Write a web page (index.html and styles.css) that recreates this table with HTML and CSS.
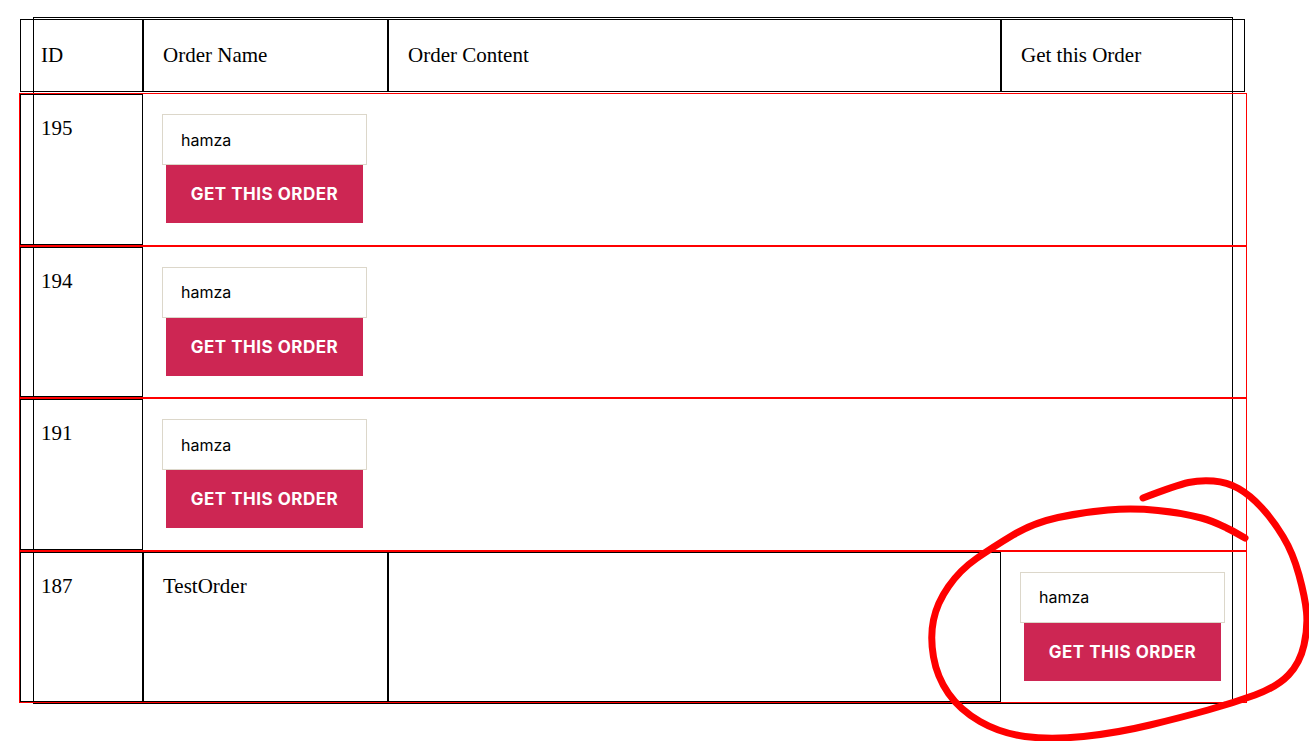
FILE: index.html
```html
<!DOCTYPE html>
<html lang="en">
<head>
    <meta charset="UTF-8">
    <meta name="viewport" content="width=device-width, initial-scale=1.0">
    <title>Orders</title>
    <link rel="stylesheet" href="styles.css">
</head>
<body>
    <div class="orders">
        <div class="head">
            <div class="cell c-id">ID</div>
            <div class="cell c-name">Order Name</div>
            <div class="cell c-content">Order Content</div>
            <div class="cell c-get">Get this Order</div>
        </div>

        <div class="row">
            <div class="cell id-box">195</div>
            <div class="cell c-wide">
                <form class="order-form">
                    <input type="text" class="order-input" value="hamza">
                    <button type="button" class="get-order">Get this order</button>
                </form>
            </div>
        </div>

        <div class="row">
            <div class="cell id-box">194</div>
            <div class="cell c-wide">
                <form class="order-form">
                    <input type="text" class="order-input" value="hamza">
                    <button type="button" class="get-order">Get this order</button>
                </form>
            </div>
        </div>

        <div class="row">
            <div class="cell id-box">191</div>
            <div class="cell c-wide">
                <form class="order-form">
                    <input type="text" class="order-input" value="hamza">
                    <button type="button" class="get-order">Get this order</button>
                </form>
            </div>
        </div>

        <div class="row">
            <div class="boxed-group">
                <div class="cell c-id">187</div>
                <div class="cell c-name">TestOrder</div>
                <div class="cell c-content"></div>
            </div>
            <div class="cell c-last">
                <form class="order-form">
                    <input type="text" class="order-input" value="hamza">
                    <button type="button" class="get-order">Get this order</button>
                </form>
            </div>
        </div>
    </div>

    <!-- hand drawn mark over the last order -->
    <svg class="scribble" width="1309" height="741" viewBox="0 0 1309 741">
        <path d="M1143 498 Q1177 485 1188.5 482.5 Q1200 480 1213.5 481 Q1227 482 1238.5 488.5 Q1250 495 1261.5 507.5 Q1273 520 1283 536.5 Q1293 553 1299 575 Q1305 597 1306.5 612 Q1308 627 1304 645 Q1300 663 1288.5 675 Q1277 687 1255 695 Q1233 703 1208 710 Q1183 717 1150 725 Q1117 733 1083.5 736.5 Q1050 740 1025 736.5 Q1000 733 980 721.5 Q960 710 948.5 693.5 Q937 677 933.5 657 Q930 637 933.5 620 Q937 603 948.5 586.5 Q960 570 976.5 558.5 Q993 547 1013 535 Q1033 523 1058 517.5 Q1083 512 1108 510 Q1133 508 1158 510.5 Q1183 513 1201.5 518 Q1220 523 1245 538"
              fill="none" stroke="#ff0000" stroke-width="7" stroke-linecap="round" stroke-linejoin="round"/>
    </svg>
</body>
</html>
```

FILE: styles.css
```css
* {
    box-sizing: border-box;
}

html, body {
    min-height: 741px;
}

body {
    margin: 0;
    padding-top: 17px;
    font-family: 'Liberation Serif', 'Times New Roman', serif;
    font-size: 21px;
    color: #000;
    background: #fff;
}

.orders {
    width: 1200px;
    margin-left: 33px;
    border: 1px solid #000;
}

.head {
    display: flex;
    height: 73px;
    margin: 1px -13px 1px -14px;
    border: 1px solid #000;
}

.head .cell {
    display: flex;
    align-items: center;
}

.cell {
    padding: 0 19px;
    line-height: 1.3;
}

.c-id {
    width: 121px;
    padding-left: 20px;
}

.c-name {
    width: 245px;
    border-left: 2px solid #000;
}

.c-content {
    width: 613px;
    border-left: 2px solid #000;
}

.c-get {
    flex: 1;
    border-left: 2px solid #000;
}

.row {
    display: flex;
    height: 152.5px;
    margin: 0 -15px;
    border: 1px solid #ff0000;
}

.id-box {
    width: 123px;
    border: 1px solid #000;
    padding: 20px 19px 0 20px;
}

.c-wide {
    flex: 1;
    padding: 20px 19px;
}

.boxed-group {
    display: flex;
    width: 981px;
    border: 1px solid #000;
}

.boxed-group .cell {
    padding-top: 20px;
}

.c-last {
    flex: 1;
    padding: 20px 19px;
}

.order-form {
    margin: 0;
}

.order-input {
    display: block;
    width: 205px;
    height: 51px;
    margin: 0;
    padding: 0 18px;
    border: 1px solid #dcd7ca;
    border-radius: 0;
    background: #fff;
    font-family: Inter, 'Noto Sans', sans-serif;
    font-size: 16px;
    color: #000;
}

.get-order {
    display: block;
    width: 197px;
    height: 58px;
    margin: 0 0 0 4px;
    padding: 0;
    border: none;
    border-radius: 0;
    background-color: #cd2653;
    color: #fff;
    font-family: Inter, 'Noto Sans', sans-serif;
    font-size: 17px;
    font-weight: 700;
    letter-spacing: 0.03em;
    text-transform: uppercase;
    cursor: pointer;
}

.scribble {
    position: absolute;
    top: 0;
    left: 0;
    overflow: visible;
    pointer-events: none;
}
```
